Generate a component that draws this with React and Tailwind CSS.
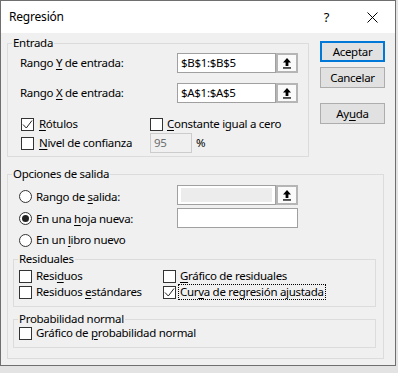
import React from 'react';

function U({ children }) {
  return <span className="underline underline-offset-2 decoration-1">{children}</span>;
}

function Check({ checked }) {
  return (
    <span className="w-[13px] h-[13px] border border-[#333] bg-white shrink-0 flex items-center justify-center">
      {checked && (
        <svg width="11" height="11" viewBox="0 0 11 11">
          <path d="M1 5.5 L4.3 9 L10 1.5" stroke="#222" strokeWidth="1" fill="none" />
        </svg>
      )}
    </span>
  );
}

function Radio({ checked }) {
  return (
    <span className="w-[13px] h-[13px] rounded-full border border-[#333] bg-white shrink-0 flex items-center justify-center">
      {checked && <span className="w-[7px] h-[7px] rounded-full bg-[#222]" />}
    </span>
  );
}

function RefButton() {
  return (
    <span className="w-[22px] h-[20px] border-2 border-[#b5b5b5] bg-[#fafafa] flex items-center justify-center shrink-0">
      <svg width="10" height="12" viewBox="0 0 10 12">
        <path d="M5 1 L9 5.5 H6.4 V9 H3.6 V5.5 H1 Z" fill="#000" />
        <rect x="1" y="10.3" width="8" height="1.3" fill="#000" />
      </svg>
    </span>
  );
}

function RefEdit({ value, disabled }) {
  return (
    <div className="flex">
      <div className="w-[99px] h-[20px] border border-[#a0a0a0] bg-white flex items-center px-[3px]">
        {disabled ? <span className="w-full h-[14px] bg-[#ececec]" /> : value}
      </div>
      <RefButton />
    </div>
  );
}

function Group({ title, className = '', children }) {
  return (
    <fieldset className={`border border-[#dcdcdc] ${className}`}>
      <legend className="ml-[4px] px-[1px] leading-[16px]">{title}</legend>
      {children}
    </fieldset>
  );
}

function Btn({ children, primary }) {
  return (
    <div
      className={`w-[65px] h-[21px] flex items-center justify-center bg-[#e1e1e1] ${
        primary ? 'border-2 border-[#0078d7]' : 'border border-[#adadad]'
      }`}
    >
      {children}
    </div>
  );
}

export default function App() {
  return (
    <div className="w-[398px] h-[373px] bg-[#e3e3e3] overflow-hidden font-['Noto_Sans',sans-serif] text-[11.5px] tracking-[-0.3px] leading-[16px] text-black">
      <div className="w-[396px] h-[366px] border border-[#6f6f6f] bg-[#f0f0f0] flex flex-col">
        <div className="h-[32px] bg-white flex items-center pl-[8px] shrink-0">
          <span className="text-[12px] tracking-[-0.2px]">Regresión</span>
          <span className="ml-auto mr-[38px] text-[13px]">?</span>
          <svg className="mr-[17px]" width="11" height="11" viewBox="0 0 11 11">
            <path d="M0.5 0.5 L10.5 10.5 M10.5 0.5 L0.5 10.5" stroke="#000" strokeWidth="1" />
          </svg>
        </div>

        <div className="flex-1 pl-[6px] pt-[2px]">
          <div className="flex">
            <Group title="Entrada" className="w-[302px]">
              <div className="pl-[12px] pt-[2px] pb-[3px]">
                <div className="flex items-center h-[20px]">
                  <span className="w-[157px]">Rango <U>Y</U> de entrada:</span>
                  <RefEdit value="$B$1:$B$5" />
                </div>
                <div className="flex items-center h-[20px] mt-[10px]">
                  <span className="w-[157px]">Rango <U>X</U> de entrada:</span>
                  <RefEdit value="$A$1:$A$5" />
                </div>
                <div className="flex items-center h-[18px] mt-[12px]">
                  <div className="w-[130px] flex items-center gap-[5px] pl-[1px]">
                    <Check checked />
                    <span><U>R</U>ótulos</span>
                  </div>
                  <div className="flex items-center gap-[4px]">
                    <Check />
                    <span><U>C</U>onstante igual a cero</span>
                  </div>
                </div>
                <div className="flex items-center h-[20px]">
                  <div className="w-[130px] flex items-center gap-[5px] pl-[1px]">
                    <Check />
                    <span><U>N</U>ivel de confianza</span>
                  </div>
                  <div className="w-[42px] h-[20px] border border-[#cccccc] bg-[#f0f0f0] text-[#6d6d6d] flex items-center px-[3px]">
                    95
                  </div>
                  <span className="ml-[4px]">%</span>
                </div>
              </div>
            </Group>

            <div className="ml-[11px] pt-[6px] flex flex-col">
              <Btn primary>Aceptar</Btn>
              <div className="mt-[5px]">
                <Btn>Cancelar</Btn>
              </div>
              <div className="mt-[15px]">
                <Btn>
                  Ay<U>u</U>da
                </Btn>
              </div>
            </div>
          </div>

          <Group title="Opciones de salida" className="w-[377px] mt-[9px]">
            <div className="pl-[5px] pr-[7px] pt-[3px] pb-[10px]">
              <div className="flex items-center h-[20px] pl-[6px]">
                <div className="w-[158px] flex items-center gap-[4px] pt-[3px]">
                  <Radio />
                  <span>Rango de <U>s</U>alida:</span>
                </div>
                <RefEdit disabled />
              </div>
              <div className="flex items-center h-[20px] pl-[6px] mt-[3px]">
                <div className="w-[158px] flex items-center gap-[4px] pt-[1px]">
                  <Radio checked />
                  <span>En una <U>h</U>oja nueva:</span>
                </div>
                <div className="w-[121px] h-[20px] border border-[#a0a0a0] bg-white" />
              </div>
              <div className="flex items-center h-[16px] pl-[6px] mt-[4px]">
                <div className="flex items-center gap-[4px]">
                  <Radio />
                  <span>En un <U>l</U>ibro nuevo</span>
                </div>
              </div>

              <Group title="Residuales" className="mt-[3px]">
                <div className="pl-[5px] pt-[1px] pb-[6px]">
                  <div className="flex items-center h-[16px]">
                    <div className="w-[144px] flex items-center gap-[4px]">
                      <Check />
                      <span>Resi<U>d</U>uos</span>
                    </div>
                    <div className="flex items-center gap-[4px]">
                      <Check />
                      <span><U>G</U>ráfico de residuales</span>
                    </div>
                  </div>
                  <div className="flex items-center h-[16px]">
                    <div className="w-[144px] flex items-center gap-[4px]">
                      <Check />
                      <span>Residuos <U>e</U>stándares</span>
                    </div>
                    <div className="flex items-center gap-[2px]">
                      <Check checked />
                      <span className="border border-dotted border-black px-[1px] leading-[14px]">
                        Cur<U>v</U>a de regresión ajustada
                      </span>
                    </div>
                  </div>
                </div>
              </Group>

              <Group title="Probabilidad normal" className="mt-[4px]">
                <div className="pl-[5px] pb-[6px]">
                  <div className="flex items-center h-[16px] -mt-[2px]">
                    <div className="flex items-center gap-[4px]">
                      <Check />
                      <span>Gráfico de <U>p</U>robabilidad normal</span>
                    </div>
                  </div>
                </div>
              </Group>
            </div>
          </Group>
        </div>
      </div>
    </div>
  );
}
